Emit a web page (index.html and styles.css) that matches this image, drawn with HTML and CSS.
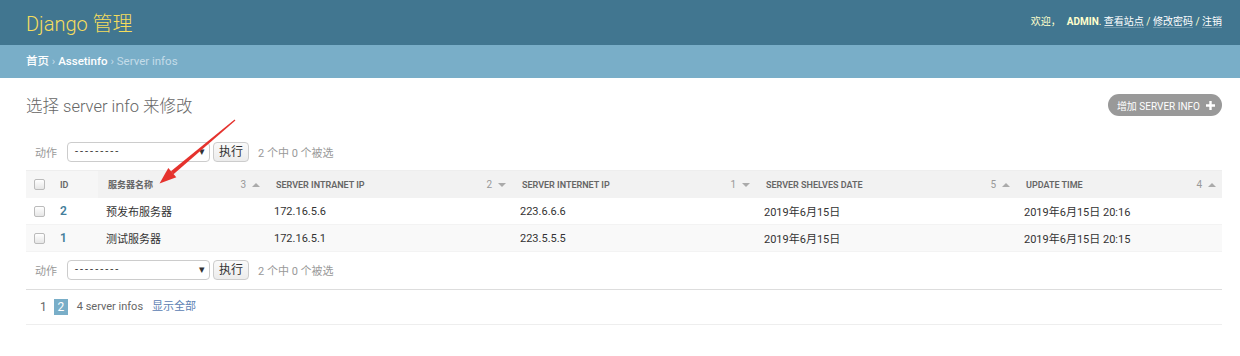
FILE: index.html
```html
<!DOCTYPE html>
<html lang="zh-hans">
<head>
    <meta charset="UTF-8">
    <title>选择 server info 来修改 | Django 站点管理员</title>
    <link rel="stylesheet" href="styles.css">
</head>
<body>
    <div class="header">
        <div class="branding">Django 管理</div>
        <div class="user-tools">
            欢迎，<strong>ADMIN</strong>.
            <a href="#">查看站点</a> /
            <a href="#">修改密码</a> /
            <a href="#">注销</a>
        </div>
    </div>

    <div class="breadcrumbs">
        <a href="#">首页</a> › <a href="#">Assetinfo</a> › Server infos
    </div>

    <div class="content">
        <div class="title-row">
            <h1>选择 server info 来修改</h1>
            <a href="#" class="addlink">增加 SERVER INFO
                <svg width="9" height="9" viewBox="0 0 9 9"><path d="M3.3 0h2.4v3.3H9v2.4H5.7V9H3.3V5.7H0V3.3h3.3z" fill="#fff"/></svg>
            </a>
        </div>

        <div class="actions actions-top">
            <span class="label">动作</span>
            <span class="select">---------<span class="caret">▾</span></span>
            <span class="button">执行</span>
            <span class="counter">2 个中 0 个被选</span>
        </div>

        <table class="result-list">
            <colgroup>
                <col style="width: 26px">
                <col style="width: 46px">
                <col style="width: 168px">
                <col style="width: 246px">
                <col style="width: 244px">
                <col style="width: 260px">
                <col style="width: 206px">
            </colgroup>
            <thead>
                <tr>
                    <th class="check"><span class="box"></span></th>
                    <th>ID</th>
                    <th class="sorted"><div class="th-inner"><span>服务器名称</span><span class="sort">3 <i class="up"></i></span></div></th>
                    <th class="sorted"><div class="th-inner"><span>Server intranet ip</span><span class="sort">2 <i class="down"></i></span></div></th>
                    <th class="sorted"><div class="th-inner"><span>Server internet ip</span><span class="sort">1 <i class="down"></i></span></div></th>
                    <th class="sorted"><div class="th-inner"><span>Server shelves date</span><span class="sort">5 <i class="up"></i></span></div></th>
                    <th class="sorted"><div class="th-inner"><span>Update time</span><span class="sort">4 <i class="up"></i></span></div></th>
                </tr>
            </thead>
            <tbody>
                <tr class="row1">
                    <td class="check"><span class="box"></span></td>
                    <td><a href="#" class="id">2</a></td>
                    <td>预发布服务器</td>
                    <td>172.16.5.6</td>
                    <td>223.6.6.6</td>
                    <td>2019年6月15日</td>
                    <td>2019年6月15日 20:16</td>
                </tr>
                <tr class="row2">
                    <td class="check"><span class="box"></span></td>
                    <td><a href="#" class="id">1</a></td>
                    <td>测试服务器</td>
                    <td>172.16.5.1</td>
                    <td>223.5.5.5</td>
                    <td>2019年6月15日</td>
                    <td>2019年6月15日 20:15</td>
                </tr>
            </tbody>
        </table>

        <div class="actions actions-bottom">
            <span class="label">动作</span>
            <span class="select">---------<span class="caret">▾</span></span>
            <span class="button">执行</span>
            <span class="counter">2 个中 0 个被选</span>
        </div>

        <div class="paginator">
            <span class="page">1</span>
            <span class="this-page">2</span>
            <span class="total">4 server infos</span>
            <a href="#" class="showall">显示全部</a>
        </div>

        <!-- red annotation arrow from the screenshot -->
        <svg class="annotation" width="1240" height="356" viewBox="0 0 1240 356">
            <polygon points="235.4,120.4 234.6,119.6 170.9,171.2 173.5,174.2" fill="#e5322d"/>
            <polygon points="159.5,183.5 168.3,167.9 176.3,177.3" fill="#e5322d"/>
        </svg>
    </div>
</body>
</html>
```

FILE: styles.css
```css
body {
    margin: 0;
    padding: 0;
    background-color: #fff;
    color: #333;
    font-family: Roboto, "Noto Sans CJK SC", sans-serif;
    font-size: 11px;
}

a {
    text-decoration: none;
}

/* Header */
.header {
    height: 45px;
    display: flex;
    align-items: center;
    justify-content: space-between;
    padding: 0 18px 0 26px;
    background-color: #417690;
}

.branding {
    color: #f5dd5d;
    font-size: 20px;
    font-weight: 300;
    margin-top: -1px;
}

.user-tools {
    color: #ffc;
    font-size: 10px;
    margin-top: -4px;
}

.user-tools strong {
    font-weight: 700;
    margin-left: 6px;
}

.user-tools a {
    color: #fff;
    border-bottom: 1px solid rgba(255, 255, 255, 0.25);
}

/* Breadcrumbs */
.breadcrumbs {
    height: 33px;
    line-height: 33px;
    padding: 0 26px;
    background-color: #79aec8;
    color: #c4dce8;
    font-size: 11.5px;
}

.breadcrumbs a {
    color: #fff;
    font-weight: 500;
}

/* Content */
.content {
    position: relative;
    padding: 0 18px 0 26px;
}

.title-row {
    height: 26px;
    padding-top: 14px;
    display: flex;
    align-items: center;
    justify-content: space-between;
}

.title-row h1 {
    margin: 0;
    color: #666;
    font-size: 16.5px;
    font-weight: 300;
}

.addlink {
    height: 22px;
    display: flex;
    align-items: center;
    gap: 6px;
    padding: 0 7px 0 9px;
    border-radius: 11px;
    background-color: #999;
    color: #fff;
    font-size: 10px;
}

/* Action bars */
.actions {
    height: 24px;
    display: flex;
    align-items: center;
    padding-left: 9px;
    color: #999;
}

.actions-top {
    padding-top: 22px;
    padding-bottom: 6px;
}

.actions-bottom {
    padding-top: 6px;
    padding-bottom: 7px;
}

.actions .label {
    width: 32px;
}

.select {
    position: relative;
    box-sizing: border-box;
    width: 143px;
    height: 20px;
    line-height: 18px;
    padding-left: 7px;
    border: 1px solid #ccc;
    border-radius: 4px;
    background-color: #fff;
    color: #333;
    letter-spacing: 2px;
}

.select .caret {
    position: absolute;
    right: 4px;
    top: 0;
    letter-spacing: 0;
    color: #333;
}

.button {
    box-sizing: border-box;
    height: 20px;
    line-height: 18px;
    margin-left: 3px;
    padding: 0 5px;
    border: 1px solid #ccc;
    border-radius: 4px;
    background: linear-gradient(#fafafa, #ececec);
    color: #333;
    font-size: 12px;
}

.counter {
    margin-left: 9px;
    color: #999;
}

/* Result table */
.result-list {
    width: 100%;
    table-layout: fixed;
    border-collapse: collapse;
}

.result-list th,
.result-list td {
    padding: 0 8px;
    text-align: left;
    white-space: nowrap;
}

.result-list thead th {
    height: 27px;
    background-color: #f6f6f6;
    border-top: 1px solid #eee;
    color: #666;
    font-size: 9px;
    font-weight: 600;
    text-transform: uppercase;
}

.result-list thead th.sorted {
    background-color: #f2f2f2;
    padding-left: 10px;
    padding-right: 6px;
}

.th-inner {
    display: flex;
    align-items: center;
    justify-content: space-between;
}

.sort {
    display: flex;
    align-items: center;
    gap: 6px;
    color: #999;
    font-size: 10px;
    font-weight: 400;
}

.sort i {
    width: 0;
    height: 0;
    border-left: 4px solid transparent;
    border-right: 4px solid transparent;
}

.sort .up {
    border-bottom: 4px solid #aaa;
}

.sort .down {
    border-top: 4px solid #aaa;
}

.result-list tbody td {
    height: 26px;
    border-bottom: 1px solid #f3f3f3;
    font-size: 11px;
}

.result-list .row2 td {
    background-color: #f9f9f9;
}

.result-list .check {
    padding-left: 8px;
    padding-right: 0;
}

.box {
    display: block;
    box-sizing: border-box;
    width: 11px;
    height: 11px;
    border: 1px solid #bbb;
    border-radius: 2px;
    background: linear-gradient(#fff, #e6e6e6);
}

.id {
    color: #447e9b;
    font-weight: 600;
    font-size: 12px;
}

/* Paginator */
.paginator {
    height: 22px;
    line-height: 22px;
    padding: 6px 0 6px 14px;
    border-top: 1px solid #ddd;
    border-bottom: 1px solid #eee;
    display: flex;
    align-items: center;
    color: #666;
}

.page {
    margin-right: 7px;
    font-size: 12px;
}

.this-page {
    width: 14px;
    height: 16px;
    line-height: 16px;
    text-align: center;
    background-color: #79aec8;
    color: #fff;
    font-size: 12px;
    margin-right: 9px;
}

.showall {
    margin-left: 9px;
    color: #5b80b2;
}

.annotation {
    position: absolute;
    left: 0;
    top: -78px;
    pointer-events: none;
}
```
